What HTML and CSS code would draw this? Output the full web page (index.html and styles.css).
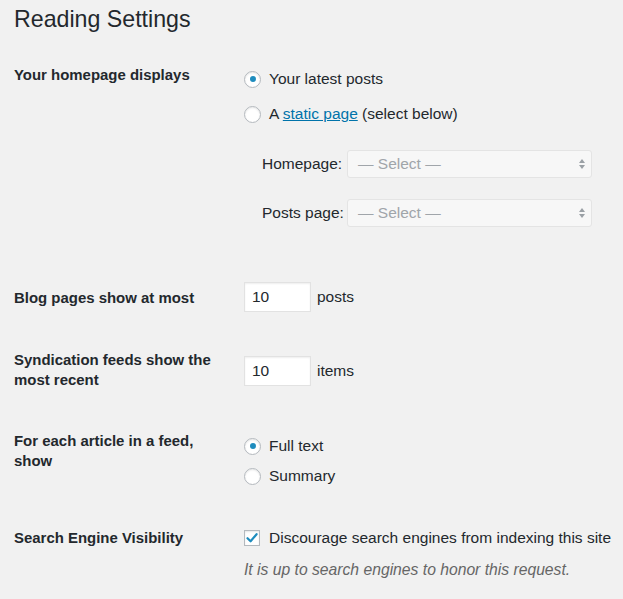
FILE: index.html
```html
<!DOCTYPE html>
<html lang="en">
<head>
<meta charset="utf-8">
<title>Reading Settings</title>
<link rel="stylesheet" href="styles.css">
</head>
<body>
<div class="wrap">
  <h1 class="title">Reading Settings</h1>

  <div class="row row-home">
    <div class="label">Your homepage displays</div>
    <div class="field">
      <div class="choice">
        <span class="radio checked"></span>
        <span>Your latest posts</span>
      </div>
      <div class="choice choice-2">
        <span class="radio"></span>
        <span>A <a class="link" href="#">static page</a> (select below)</span>
      </div>
      <div class="pages">
        <div class="page-row">
          <span class="page-label">Homepage:</span>
          <div class="select"><span>— Select —</span>
            <svg class="arrows" width="8" height="12" viewBox="0 0 8 12"><path d="M4 1 L7 5 H1 Z M4 11 L7 7 H1 Z" fill="#9aa0a5"/></svg>
          </div>
        </div>
        <div class="page-row page-row-2">
          <span class="page-label">Posts page:</span>
          <div class="select"><span>— Select —</span>
            <svg class="arrows" width="8" height="12" viewBox="0 0 8 12"><path d="M4 1 L7 5 H1 Z M4 11 L7 7 H1 Z" fill="#9aa0a5"/></svg>
          </div>
        </div>
      </div>
    </div>
  </div>

  <div class="row row-blog">
    <div class="label label-blog">Blog pages show at most</div>
    <div class="field field-inline">
      <div class="num">10</div>
      <span class="unit">posts</span>
    </div>
  </div>

  <div class="row row-feed">
    <div class="label">Syndication feeds show the<br>most recent</div>
    <div class="field field-inline field-feed">
      <div class="num">10</div>
      <span class="unit">items</span>
    </div>
  </div>

  <div class="row row-article">
    <div class="label">For each article in a feed,<br>show</div>
    <div class="field field-article">
      <div class="choice">
        <span class="radio checked"></span>
        <span>Full text</span>
      </div>
      <div class="choice choice-summary">
        <span class="radio"></span>
        <span>Summary</span>
      </div>
    </div>
  </div>

  <div class="row row-search">
    <div class="label">Search Engine Visibility</div>
    <div class="field">
      <div class="choice">
        <span class="checkbox">
          <svg width="14" height="14" viewBox="0 0 14 14"><path d="M2.5 7.2 L5.6 10.3 L11.6 3.2" fill="none" stroke="#1e8cbe" stroke-width="2.2" stroke-linecap="round" stroke-linejoin="round"/></svg>
        </span>
        <span>Discourage search engines from indexing this site</span>
      </div>
      <p class="desc">It is up to search engines to honor this request.</p>
    </div>
  </div>
</div>
</body>
</html>
```

FILE: styles.css
```css
html, body {
  margin: 0;
  padding: 0;
  background: #f1f1f1;
}

body {
  font-family: "Liberation Sans", Arial, sans-serif;
  font-size: 15.5px;
  color: #23282d;
}

.wrap {
  padding-left: 14px;
  padding-top: 4px;
}

.title {
  margin: 0;
  font-size: 23.2px;
  font-weight: 400;
  line-height: 30px;
  color: #23282d;
}

.row {
  display: grid;
  grid-template-columns: 230px 1fr;
  align-items: start;
}

.label {
  font-weight: 700;
  line-height: 20px;
  font-size: 14.95px;
}

.row-home { margin-top: 31px; }
.row-blog { margin-top: 55px; }
.row-feed { margin-top: 38px; }
.row-article { margin-top: 41px; }
.row-search { margin-top: 42px; }

.row-home .field { padding-top: 4px; }

.choice {
  display: flex;
  align-items: center;
  height: 20px;
  line-height: 20px;
}

.choice-2 { margin-top: 15px; }

.radio {
  width: 17px;
  height: 17px;
  box-sizing: border-box;
  border: 1px solid #b4b9be;
  border-radius: 50%;
  background: #fff;
  box-shadow: inset 0 1px 2px rgba(0, 0, 0, 0.1);
  margin-right: 8px;
  display: flex;
  align-items: center;
  justify-content: center;
  flex: none;
}

.radio.checked::after {
  content: "";
  width: 6px;
  height: 6px;
  border-radius: 50%;
  background: #1e8cbe;
}

.link {
  color: #0073aa;
  text-decoration: underline;
}

.pages {
  margin-top: 26px;
  padding-left: 18px;
}

.page-row {
  display: grid;
  grid-template-columns: 85px 245px;
  align-items: center;
  height: 28px;
}

.page-row-2 { margin-top: 21px; }

.select {
  height: 28px;
  box-sizing: border-box;
  border: 1px solid #e4e4e4;
  border-radius: 3px;
  background: #f7f7f7;
  color: #a0a5aa;
  display: flex;
  align-items: center;
  justify-content: space-between;
  padding: 0 5px 0 10px;
}

.arrows { display: block; }

.field-inline {
  display: flex;
  align-items: center;
}

.label-blog { padding-top: 6px; }

.field-feed { padding-top: 6px; }

.num {
  width: 67px;
  height: 30px;
  box-sizing: border-box;
  border: 1px solid #e2e2e2;
  background: #fff;
  box-shadow: inset 0 1px 2px rgba(0, 0, 0, 0.07);
  padding: 0 7px;
  line-height: 28px;
}

.unit { margin-left: 6px; }

.field-article { padding-top: 5px; }

.choice-summary { margin-top: 10px; }

.checkbox {
  width: 16px;
  height: 16px;
  box-sizing: border-box;
  border: 1px solid #b4b9be;
  background: #fff;
  box-shadow: inset 0 1px 2px rgba(0, 0, 0, 0.1);
  margin-right: 9px;
  display: flex;
  align-items: center;
  justify-content: center;
  flex: none;
}

.checkbox svg { display: block; }

.desc {
  margin: 12px 0 0;
  line-height: 20px;
  font-style: italic;
  color: #666;
  font-size: 15.7px;
}
```
